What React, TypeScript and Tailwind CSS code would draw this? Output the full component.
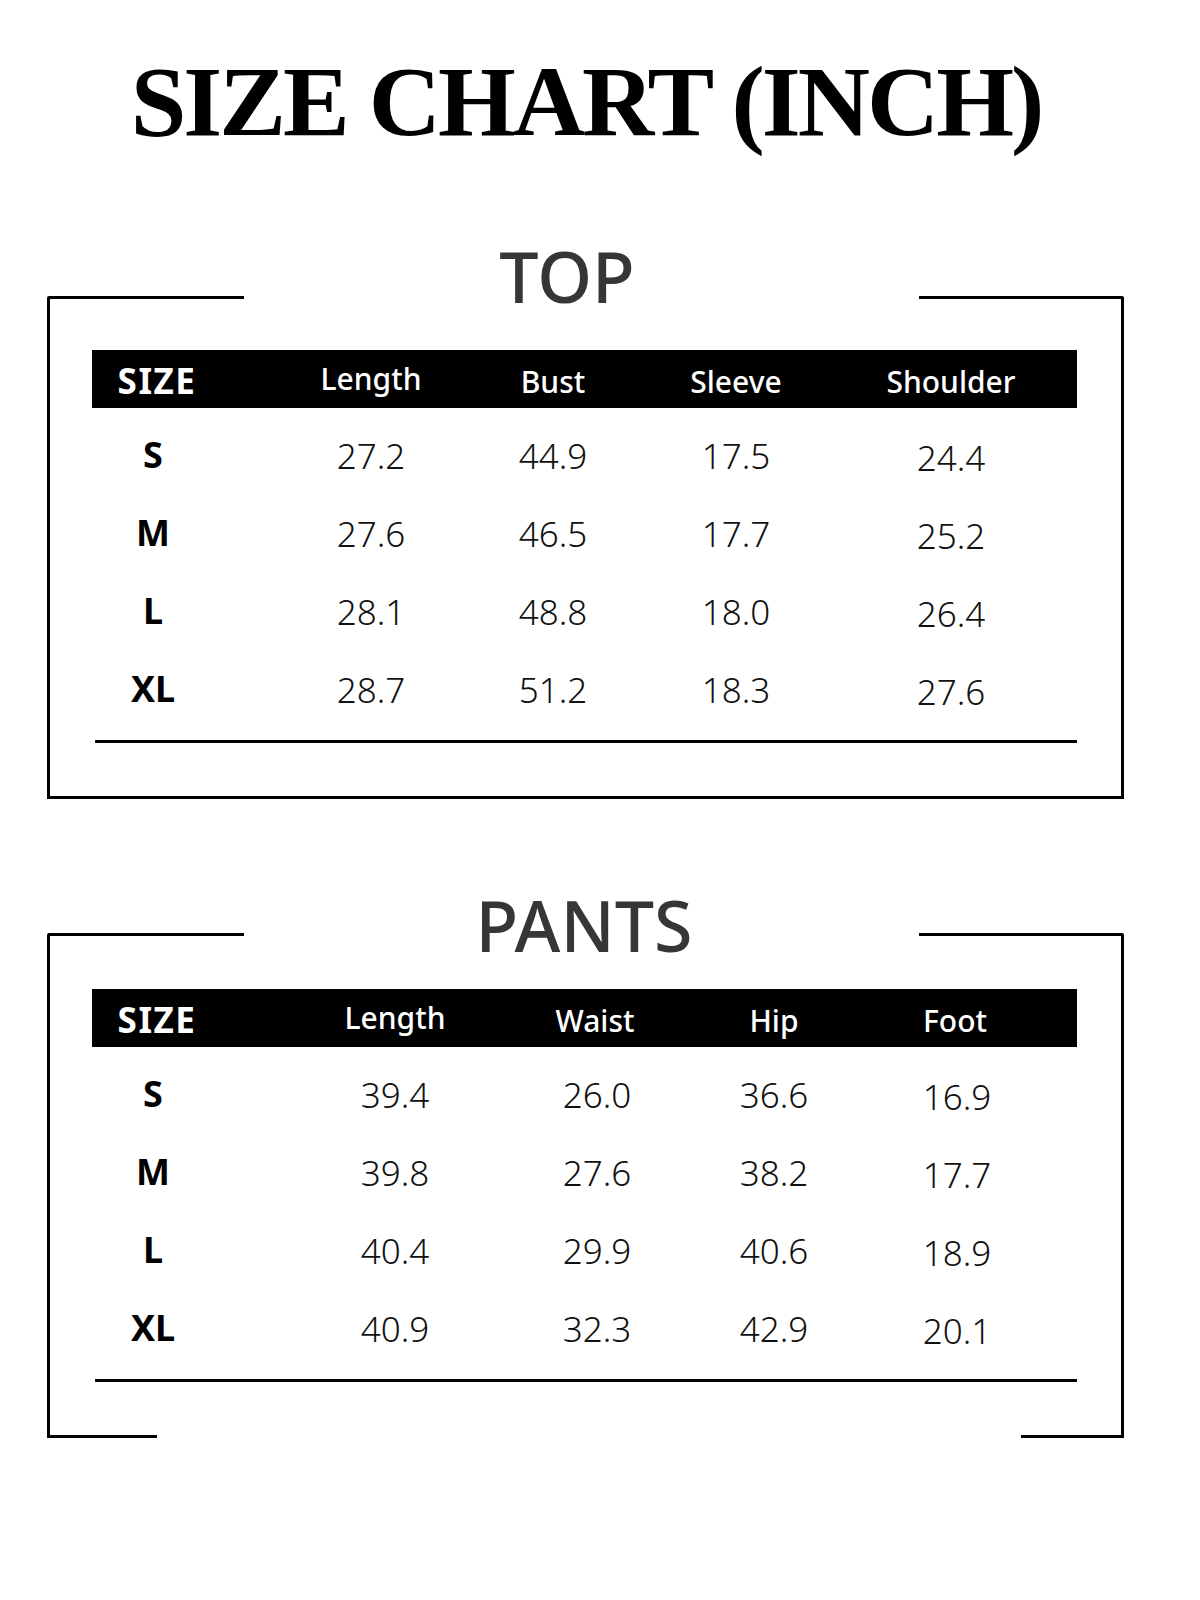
import React from "react";

type Table = {
  title: string;
  titlePad: string;
  headMt: string;
  boxMt: string;
  barPt: string;
  tpl: string;
  headers: { label: string; cls: string }[];
  rows: string[][];
  lastCellPad: string;
  fullBottom: boolean;
};

const sans = "font-['Noto_Sans',sans-serif]";

const tables: Table[] = [
  {
    title: "TOP",
    titlePad: "pr-[66px]",
    headMt: "mt-[89px]",
    boxMt: "-mt-[15px]",
    barPt: "pt-[51px]",
    tpl: "grid grid-cols-[122px_314px_50px_316px_114px] items-center",
    headers: [
      { label: "SIZE", cls: "pl-[8px] pt-[2px] text-[35px] font-bold tracking-[1.5px]" },
      { label: "Length", cls: "text-[30px] font-medium" },
      { label: "Bust", cls: "pt-[6px] text-[30px] font-medium" },
      { label: "Sleeve", cls: "pt-[6px] text-[30px] font-medium" },
      { label: "Shoulder", cls: "pt-[6px] text-[30px] font-medium" },
    ],
    rows: [
      ["S", "27.2", "44.9", "17.5", "24.4"],
      ["M", "27.6", "46.5", "17.7", "25.2"],
      ["L", "28.1", "48.8", "18.0", "26.4"],
      ["XL", "28.7", "51.2", "18.3", "27.6"],
    ],
    lastCellPad: "pt-[4px]",
    fullBottom: true,
  },
  {
    title: "PANTS",
    titlePad: "pr-[32px]",
    headMt: "mt-[91px]",
    boxMt: "-mt-[27px]",
    barPt: "pt-[53px]",
    tpl: "grid grid-cols-[122px_362px_42px_312px_54px] items-center",
    headers: [
      { label: "SIZE", cls: "pl-[8px] pt-[2px] text-[35px] font-bold tracking-[1.5px]" },
      { label: "Length", cls: "text-[30px] font-medium" },
      { label: "Waist", cls: "pr-[4px] pt-[6px] text-[30px] font-medium" },
      { label: "Hip", cls: "pt-[6px] text-[30px] font-medium" },
      { label: "Foot", cls: "pr-[4px] pt-[6px] text-[30px] font-medium" },
    ],
    rows: [
      ["S", "39.4", "26.0", "36.6", "16.9"],
      ["M", "39.8", "27.6", "38.2", "17.7"],
      ["L", "40.4", "29.9", "40.6", "18.9"],
      ["XL", "40.9", "32.3", "42.9", "20.1"],
    ],
    lastCellPad: "pt-[4px]",
    fullBottom: false,
  },
];

function SizeTable({ t }: { t: Table }) {
  return (
    <section>
      <h2
        className={`${t.headMt} ${t.titlePad} h-[70px] text-center text-[70px] leading-[70px] font-medium text-[#363636] ${sans}`}
      >
        {t.title}
      </h2>
      <div className={`${t.boxMt} ml-[47px] w-[1077px]`}>
        <div className="flex h-[3px] justify-between">
          <div className="h-[3px] w-[197px] rounded-tl-[2px] bg-black" />
          <div className="h-[3px] w-[205px] rounded-tr-[2px] bg-black" />
        </div>
        <div className={`border-x-[3px] border-black ${t.barPt} pb-[53px]`}>
          <div
            className={`ml-[42px] h-[58px] w-[985px] bg-black text-white ${t.tpl} ${sans}`}
          >
            {t.headers.map((h) => (
              <div
                key={h.label}
                className={`flex justify-center whitespace-nowrap leading-none ${h.cls}`}
              >
                {h.label}
              </div>
            ))}
          </div>
          <div className={`ml-[42px] pt-[8px] w-[985px] ${sans}`}>
            {t.rows.map((r) => (
              <div key={r[0]} className={`h-[78px] ${t.tpl}`}>
                {r.map((c, i) => (
                  <div
                    key={i}
                    className={
                      i === 0
                        ? "flex justify-center whitespace-nowrap text-[36px] font-bold leading-none text-black"
                        : i === 4
                        ? `flex justify-center whitespace-nowrap text-[35px] font-light leading-none text-[#111] ${t.lastCellPad}`
                        : "flex justify-center whitespace-nowrap text-[35px] font-light leading-none text-[#111]"
                    }
                  >
                    {c}
                  </div>
                ))}
              </div>
            ))}
          </div>
          <div className="ml-[45px] mt-[12px] h-[3px] w-[982px] bg-black" />
        </div>
        {t.fullBottom ? (
          <div className="h-[3px] w-full bg-black" />
        ) : (
          <div className="flex h-[3px] justify-between">
            <div className="h-[3px] w-[110px] bg-black" />
            <div className="h-[3px] w-[103px] bg-black" />
          </div>
        )}
      </div>
    </section>
  );
}

export default function App() {
  return (
    <div className="h-[1600px] w-[1200px] bg-white">
      <h1 className="pt-[52px] pr-[28px] text-center font-['Liberation_Serif',serif] text-[100px] font-bold leading-[100px] tracking-[-3px] text-black">
        SIZE CHART (INCH)
      </h1>
      {tables.map((t) => (
        <SizeTable key={t.title} t={t} />
      ))}
    </div>
  );
}
